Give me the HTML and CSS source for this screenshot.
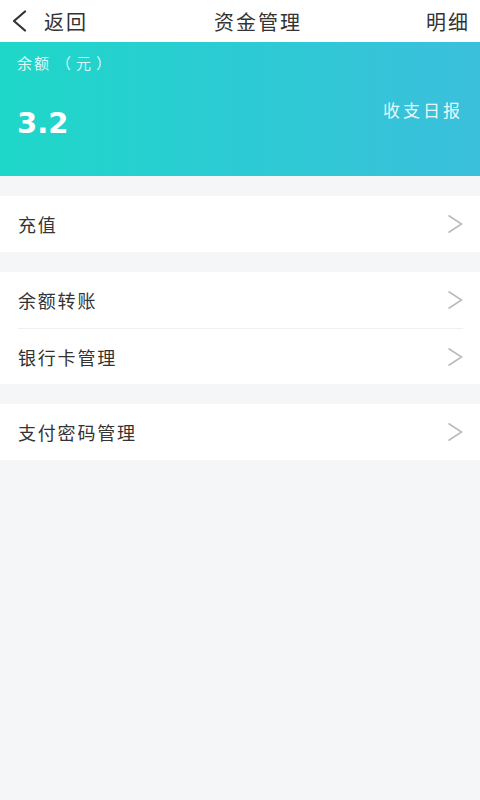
FILE: index.html
```html
<!DOCTYPE html>
<html lang="zh-CN">
<head>
    <meta charset="UTF-8">
    <meta name="viewport" content="width=device-width, initial-scale=1.0">
    <title>资金管理</title>
    <link rel="stylesheet" href="styles.css">
</head>
<body>
    <div class="page">
        <header class="topbar">
            <a class="back" href="#">
                <svg class="back-icon" viewBox="0 0 16 22" width="16" height="22">
                    <polyline points="14,1.5 3,11 14,20.5" fill="none" stroke="#333" stroke-width="2.2" stroke-linecap="round" stroke-linejoin="round"/>
                </svg>
                <span>返回</span>
            </a>
            <h1 class="title">资金管理</h1>
            <a class="detail" href="#">明细</a>
        </header>

        <section class="balance">
            <div class="balance-label">余额<span class="unit">（元）</span></div>
            <div class="balance-row">
                <div class="balance-value">3.2</div>
                <a class="daily" href="#">收支日报</a>
            </div>
        </section>

        <ul class="group">
            <li class="item">充值<svg class="arrow" viewBox="0 0 16 20" width="16" height="20"><polyline points="1.5,1.5 14.5,10 1.5,18.5"/></svg></li>
        </ul>
        <ul class="group">
            <li class="item">余额转账<svg class="arrow" viewBox="0 0 16 20" width="16" height="20"><polyline points="1.5,1.5 14.5,10 1.5,18.5"/></svg></li>
            <li class="item">银行卡管理<svg class="arrow" viewBox="0 0 16 20" width="16" height="20"><polyline points="1.5,1.5 14.5,10 1.5,18.5"/></svg></li>
        </ul>
        <ul class="group">
            <li class="item">支付密码管理<svg class="arrow" viewBox="0 0 16 20" width="16" height="20"><polyline points="1.5,1.5 14.5,10 1.5,18.5"/></svg></li>
        </ul>
    </div>
</body>
</html>
```

FILE: styles.css
```css
body {
    margin: 0;
    font-family: "Noto Sans CJK SC", "Noto Sans", sans-serif;
    background-color: #f4f6f8;
    color: #333;
}
a {
    color: inherit;
    text-decoration: none;
}
.page {
    min-height: 800px;
}
.topbar {
    height: 42px;
    background-color: #fff;
    display: flex;
    align-items: center;
    padding: 0 10px 0 11px;
    font-size: 20px;
    letter-spacing: 2px;
}
.back {
    display: flex;
    align-items: center;
    gap: 17px;
}
.back-icon {
    display: block;
}
.title {
    flex: 1;
    margin: 0;
    padding-left: 2px;
    text-align: center;
    font-size: 20px;
    font-weight: normal;
}
.balance {
    height: 134px;
    box-sizing: border-box;
    padding: 10px 20px 0 17px;
    background: linear-gradient(90deg, #1ed7c8 0%, #2ccbd4 50%, #3bbfdc 100%);
    color: #fff;
}
.balance-label {
    font-size: 15px;
    line-height: 22px;
    letter-spacing: 2px;
    color: rgba(255, 255, 255, 0.85);
}
/* 全角括号被压缩了，手动补宽 */
.unit {
    padding-left: 5px;
    letter-spacing: 5px;
}
.balance-row {
    display: flex;
    justify-content: space-between;
    align-items: flex-start;
    margin-top: 24px;
}
.balance-value {
    font-family: "DejaVu Sans", sans-serif;
    font-size: 29px;
    font-weight: bold;
    line-height: 40px;
    margin-top: 5px;
}
.daily {
    font-size: 17px;
    line-height: 22px;
    letter-spacing: 3px;
    margin-top: 1px;
    margin-right: -3px;
    color: rgba(255, 255, 255, 0.9);
}
.group {
    list-style: none;
    margin: 20px 0 0;
    padding: 0 17px 0 18px;
    background-color: #fff;
}
.item {
    height: 56px;
    display: flex;
    align-items: center;
    justify-content: space-between;
    font-size: 18px;
    letter-spacing: 1.8px;
    color: #333;
}
.item + .item {
    border-top: 1px solid #eeeff1;
    height: 55px;
}
.arrow {
    display: block;
    fill: none;
    stroke: #bbbbbb;
    stroke-width: 1.6;
    stroke-linejoin: miter;
}
```
